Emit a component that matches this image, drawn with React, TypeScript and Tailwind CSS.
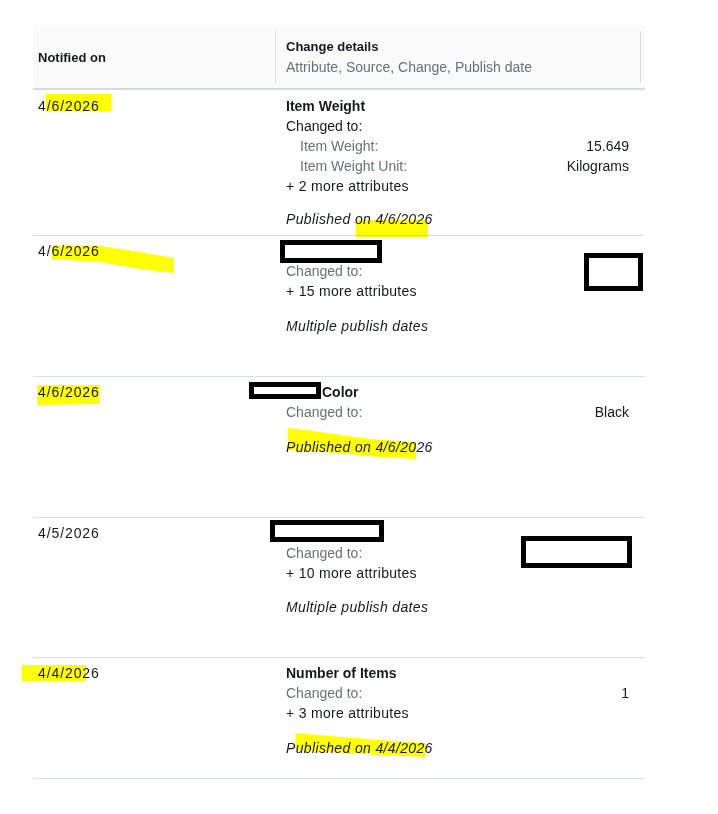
import React from 'react'

interface Attr {
  label: string
  value: string
}

interface ChangeRow {
  date: string
  height: string
  padTop: string
  title: string
  titleIndent?: boolean
  changedDark?: boolean
  changedValue?: string
  attrs?: Attr[]
  more?: string
  publish: string
  publishGap: string
}

const rows: ChangeRow[] = [
  {
    date: '4/6/2026',
    height: 'h-[145px]',
    padTop: 'pt-[6px]',
    title: 'Item Weight',
    changedDark: true,
    attrs: [
      { label: 'Item Weight:', value: '15.649' },
      { label: 'Item Weight Unit:', value: 'Kilograms' },
    ],
    more: '+ 2 more attributes',
    publish: 'Published on 4/6/2026',
    publishGap: 'mt-[13px]',
  },
  {
    date: '4/6/2026',
    height: 'h-[141px]',
    padTop: 'pt-[5px]',
    title: '',
    more: '+ 15 more attributes',
    publish: 'Multiple publish dates',
    publishGap: 'mt-[15px]',
  },
  {
    date: '4/6/2026',
    height: 'h-[141px]',
    padTop: 'pt-[5px]',
    title: 'Color',
    titleIndent: true,
    changedValue: 'Black',
    publish: 'Published on 4/6/2026',
    publishGap: 'mt-[15px]',
  },
  {
    date: '4/5/2026',
    height: 'h-[140px]',
    padTop: 'pt-[5px]',
    title: '',
    more: '+ 10 more attributes',
    publish: 'Multiple publish dates',
    publishGap: 'mt-[14px]',
  },
  {
    date: '4/4/2026',
    height: 'h-[121px]',
    padTop: 'pt-[5px]',
    title: 'Number of Items',
    changedValue: '1',
    more: '+ 3 more attributes',
    publish: 'Published on 4/4/2026',
    publishGap: 'mt-[15px]',
  },
]

// black boxes drawn over the screenshot to hide values
const redactions = [
  'left-[280px] top-[240px] w-[102px] h-[23px]',
  'left-[584px] top-[253px] w-[59px] h-[38px]',
  'left-[249px] top-[382px] w-[72px] h-[17px]',
  'left-[270px] top-[520px] w-[114px] h-[22px]',
  'left-[521px] top-[536px] w-[111px] h-[32px]',
]

// marker strokes, page coordinates
const highlights = [
  '46,94 111,94 111,111 46,111',
  '356,220 428,220 428,237 356,237',
  '52,245 100,246 140,252 174,258 174,273 140,269 100,262 52,259',
  '37,385 100,385 100,404 37,405',
  '288,428 307,430 340,435 370,439 416,442 416,459 380,457 340,453 288,450',
  '22,665 86,665 86,681 22,681',
  '296,733 330,736 380,740 426,743 426,757 380,755 330,752 296,750',
]

export default function App() {
  return (
    <div className="relative w-[718px] h-[814px] bg-white font-['Liberation_Sans',Arial,sans-serif] text-[14px] leading-5 text-[#16191f]">
      <div className="ml-[33px] pt-[26px] w-[612px]">
        <div className="flex h-[64px] bg-[#fafafa] border-b-2 border-[#d5dbdb] py-[5px]">
          <div className="w-[242px] pl-[5px] pt-[1px] flex items-center text-[13px] font-bold">Notified on</div>
          <div className="flex-1 mr-[4px] border-l border-r border-[#d5dbdb] pl-[10px] flex flex-col justify-center">
            <div className="text-[13px] font-bold">Change details</div>
            <div className="text-[#687078]">Attribute, Source, Change, Publish date</div>
          </div>
        </div>

        <div className="border-b border-[#dadfe1]">
          {rows.map((row, i) => (
            <Row key={i} row={row} first={i === 0} />
          ))}
        </div>
      </div>

      <svg className="absolute inset-0 pointer-events-none mix-blend-multiply" width="718" height="814" viewBox="0 0 718 814">
        {highlights.map((pts, i) => (
          <polygon key={i} points={pts} fill="#ffff00" />
        ))}
      </svg>

      {redactions.map((cls, i) => (
        <div key={i} className={`absolute ${cls} border-[5px] border-black bg-white`} />
      ))}
    </div>
  )
}

function Row({ row, first }: { row: ChangeRow; first: boolean }) {
  return (
    <div className={`flex ${row.height} ${row.padTop} ${first ? '' : 'border-t border-[#dadfe1]'}`}>
      <div className="w-[242px] pl-[5px] tracking-[0.9px]">{row.date}</div>
      <div className="flex-1 pl-[11px] pr-[16px]">
        <div className={`h-5 font-bold ${row.titleIndent ? 'pl-[36px]' : ''}`}>{row.title}</div>
        <div className="flex justify-between">
          <span className={row.changedDark ? '' : 'text-[#687078]'}>Changed to:</span>
          {row.changedValue && <span>{row.changedValue}</span>}
        </div>
        {row.attrs?.map(a => (
          <div key={a.label} className="flex justify-between pl-[14px]">
            <span className="text-[#687078]">{a.label}</span>
            <span>{a.value}</span>
          </div>
        ))}
        {row.more && <div className="tracking-[0.3px]">{row.more}</div>}
        <div className={`${row.publishGap} italic tracking-[0.35px]`}>{row.publish}</div>
      </div>
    </div>
  )
}
